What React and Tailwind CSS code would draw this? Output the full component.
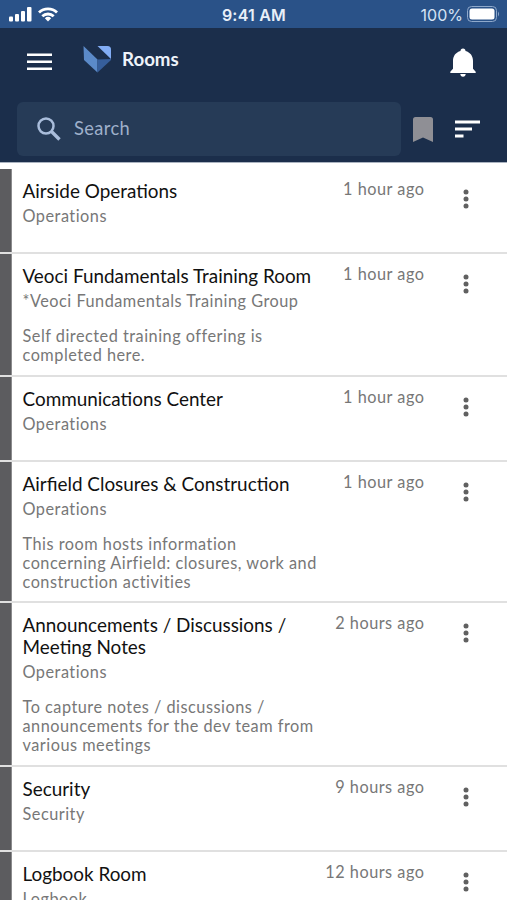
import React from "react";

const rooms = [
  { name: "Airside Operations", group: "Operations", time: "1 hour ago", height: "h-[85px]" },
  {
    name: "Veoci Fundamentals Training Room",
    group: "*Veoci Fundamentals Training Group",
    time: "1 hour ago",
    lines: ["Self directed training offering is", "completed here."],
    height: "h-[123px]",
  },
  { name: "Communications Center", group: "Operations", time: "1 hour ago", height: "h-[85px]" },
  {
    name: "Airfield Closures & Construction",
    group: "Operations",
    time: "1 hour ago",
    lines: ["This room hosts information", "concerning Airfield: closures, work and", "construction activities"],
    height: "h-[141px]",
  },
  {
    name: "Announcements / Discussions / Meeting Notes",
    group: "Operations",
    time: "2 hours ago",
    lines: ["To capture notes / discussions /", "announcements for the dev team from", "various meetings"],
    height: "h-[164px]",
  },
  { name: "Security", group: "Security", time: "9 hours ago", height: "h-[85px]" },
  { name: "Logbook Room", group: "Logbook", time: "12 hours ago", height: "h-[85px]" },
];

const App = () => {
  return (
    <div className="w-full h-screen flex flex-col overflow-hidden bg-white font-['Lato','Open_Sans',sans-serif]">
      <StatusBar />

      {/* --- HEADER --- */}
      <header className="h-[135px] shrink-0 bg-[#1b2e4b] border-b border-[#aab3c0]">
        <div className="h-[74px] flex items-center pl-[27px] pr-[31px]">
          <svg width="25" height="18" viewBox="0 0 25 18" className="mt-[-7px]" fill="#fff">
            <path d="M0 .5h25v2.500H0zM0 7.500h25v2.500H0zM0 14.500h25v2.500H0z" />
          </svg>
          <svg width="29" height="28" viewBox="0 0 29 28" className="ml-[31px] mt-[-13px]">
            <path d="M.5 1 14.500 14.500V27.500L1 15Z" fill="#5b8ac9" />
            <path d="M14.500 14.500 28 14V15L14.500 27.500Z" fill="#365e9b" />
            <path d="M14.500 1H24.500Q28 1 28 4.500V14Z" fill="#82adf5" />
          </svg>
          <h1 className="ml-[10px] mt-[-12px] text-[18.700px] font-bold text-[#eef3fa]">Rooms</h1>
          <svg width="26" height="29" viewBox="0 0 26 29" className="ml-auto mt-[-6px]" fill="#fff">
            <path d="M13 .5c1.600 0 2.500 1 2.500 2.400 4.800 1.300 7.500 5 7.500 9.800v8l2.700 3v1.200H.3v-1.200l2.700-3v-8c0-4.800 2.700-8.500 7.500-9.800C10.500 1.500 11.400.5 13 .5ZM10.300 26h5.400c0 1.500-1.100 2.700-2.700 2.700S10.300 27.500 10.300 26Z" />
          </svg>
        </div>
        <div className="flex items-center pl-[17px] pr-[27px]">
          <div className="w-[384px] h-[54px] flex items-center rounded-md bg-[#263b57] pl-5">
            <svg width="24" height="24" viewBox="0 0 24 24" fill="none" stroke="#a9bddb">
              <circle cx="9" cy="9" r="7.500" strokeWidth="2.500" />
              <path d="m14.500 14.500 8 8" strokeWidth="3.400" />
            </svg>
            <span className="ml-[13px] text-[18.300px] tracking-[0.4px] text-[#9fb0cb]">Search</span>
          </div>
          <svg width="20" height="25" viewBox="0 0 20 25" className="ml-3" fill="#8f8f95">
            <path d="M0 2.500Q0 0 2.500 0H17.500Q20 0 20 2.500V25L10 20.500 0 25Z" />
          </svg>
          <svg width="25" height="18" viewBox="0 0 25 18" className="ml-auto" fill="#fff">
            <path d="M0 .5h25v3H0zM0 7.500h17v3H0zM0 14.500h8.500v3H0z" />
          </svg>
        </div>
      </header>

      {/* --- ROOM LIST --- */}
      <main className="pt-[6px]">
        {rooms.map((room) => (
          <RoomRow key={room.name} {...room} />
        ))}
      </main>
    </div>
  );
};

const StatusBar = () => (
  <div className="h-7 shrink-0 grid grid-cols-3 items-center bg-[#2a5288] pl-[9px] pr-[7px] font-['Inter',sans-serif] text-white">
    <div className="flex items-center gap-[6px]">
      <svg width="23" height="15" viewBox="0 0 23 15" fill="#fff">
        <rect x="0" y="9.500" width="4" height="5" rx="1" />
        <rect x="6" y="7" width="4" height="7.500" rx="1" />
        <rect x="12" y="4" width="4" height="10.500" rx="1" />
        <rect x="18" y="0" width="4.500" height="14.500" rx="1" />
      </svg>
      <svg width="20" height="15" viewBox="0 0 20 15" fill="none" stroke="#fff" strokeWidth="2.800">
        <path d="M1 5.600a12.800 12.800 0 0 1 18 0M4.300 9.300a8.200 8.200 0 0 1 11.400 0" />
        <path d="M6.800 11.300a4.700 4.700 0 0 1 6.400 0L10 14.600Z" fill="#fff" stroke="none" />
      </svg>
    </div>
    <span className="pt-px pr-px text-center text-[16px] font-semibold tracking-[0.2px] text-[#e8eff8]">9:41 AM</span>
    <div className="flex items-center justify-end gap-[4px]">
      <span className="pt-px text-[16px] text-[#d5e3f5]">100%</span>
      <svg width="33" height="16" viewBox="0 0 33 16">
        <rect x=".5" y=".5" width="29" height="15" rx="4" fill="none" stroke="#8fa9cb" />
        <rect x="2.500" y="2.500" width="25" height="11" rx="2.500" fill="#fff" />
        <path d="M31 5.500q2 2.500 0 5Z" fill="#8fa9cb" />
      </svg>
    </div>
  </div>
);

/* Single room with side stripe, time and menu dots */
const RoomRow = ({ name, group, time, lines, height }) => (
  <div className={`${height} flex border-b-2 border-[#e0e0e0]`}>
    <div className="w-[12px] shrink-0 bg-[#5c5c5f] border-r border-[#8b8b8d]" />
    <div className="w-[306px] shrink-0 pl-[10.500px] pt-[11px]">
      <h2 className="text-[18.900px] leading-[22px] text-[#111]">{name}</h2>
      <p className="mt-[4px] text-[16.300px] leading-[19px] tracking-[0.5px] whitespace-nowrap text-[#777]">{group}</p>
      {lines && (
        <div className="mt-[16px] text-[16.300px] leading-[19px] tracking-[0.5px] whitespace-nowrap text-[#777]">
          {lines.map((line) => (
            <p key={line}>{line}</p>
          ))}
        </div>
      )}
    </div>
    <p className="w-[106.500px] shrink-0 pt-[9px] text-right text-[16.300px] leading-[21px] tracking-[0.5px] text-[#777]">{time}</p>
    <svg width="6" height="20" viewBox="0 0 6 20" className="ml-[38.500px] mt-[20px]" fill="#606060">
      <circle cx="3" cy="3" r="2.500" />
      <circle cx="3" cy="10" r="2.500" />
      <circle cx="3" cy="17" r="2.500" />
    </svg>
  </div>
);

export default App;
